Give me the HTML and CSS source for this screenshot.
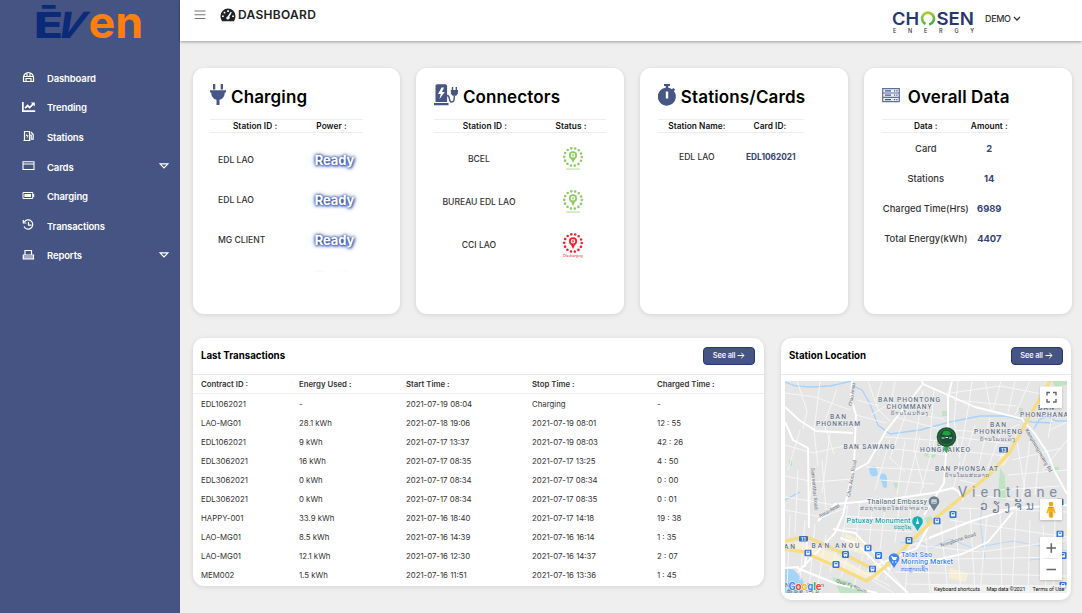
FILE: index.html
```html
<!DOCTYPE html>
<html lang="en">
<head>
<meta charset="utf-8">
<title>Dashboard</title>
<link rel="stylesheet" href="styles.css">
</head>
<body>
<svg width="0" height="0" class="defs">
  <symbol id="gauge" viewBox="0 0 16 14"><path fill="currentColor" fill-rule="evenodd" d="M8 .5A7.5 7.5 0 0 0 .5 8c0 2 .6 3.6 1.6 5.2h11.8C14.900 11.600 15.500 10 15.500 8A7.500 7.500 0 0 0 8 .5zM7.200 2.200h1.700v1.700H7.200zM3.700 3.800h1.700v1.700H3.700zM2 7.400h1.800v1.700H2zM12.200 7.400H14v1.700h-1.800zM10.600 3.800l1.200.7-2.400 4.300c.8 1.300.1 2.700-1.400 2.700-2 0-2.500-2.500-.4-3.100z"/></symbol>
  <symbol id="bus" viewBox="0 0 7 7"><rect width="7" height="7" rx="1.200" fill="#2f73df"/><rect x="1.600" y="1.300" width="3.800" height="4" rx=".7" fill="#fff"/><path fill="#2f73df" d="M2.300 2h2.400v1.300H2.300z"/><path fill="#fff" d="M2 5.200h.8v.8H2zM4.200 5.200H5V6h-.8z"/></symbol>
  <symbol id="connector" viewBox="0 0 24 22"><circle cx="12" cy="11" r="8.800" fill="none" stroke="currentColor" stroke-width="2.600" stroke-linecap="round" stroke-dasharray="0 3.949"/><circle cx="12" cy="9.300" r="3.200" fill="#fff" stroke="currentColor" stroke-width="1.800"/><path d="M12.600 7l-2 2.500h1.200l-.4 2 2-2.700h-1.200z" fill="currentColor"/><path d="M9.700 12.300h4.600L12 17z" fill="currentColor"/></symbol>
</svg>
<div class="app">
  <aside class="sidebar">
    <svg class="brand" viewBox="0 0 110 36">
      <text x="-2" y="35" font-size="36" font-weight="800" fill="#0b2a78" textLength="29" lengthAdjust="spacingAndGlyphs">Ē</text>
      <text transform="translate(16 35) skewX(-25)" font-size="36" font-weight="800" fill="#0b2a78" textLength="27" lengthAdjust="spacingAndGlyphs">V</text>
      <text x="52.500" y="35" font-size="44" font-weight="700" fill="#ff7f0e" textLength="54.500" lengthAdjust="spacingAndGlyphs">en</text>
    </svg>
    <nav class="menu">
      <a class="item"><svg class="mi" viewBox="0 0 14 12"><path d="M1.500 10.500V6.500a5 5 0 0 1 10 0v4zM4 10v-2.500h5V10M1.500 5.500h10M5 2v3M8 2v3" fill="none" stroke="#fff" stroke-width="1.200"/></svg><span>Dashboard</span></a>
      <a class="item"><svg class="mi" viewBox="0 0 14 12"><path d="M.8 1v9.200h12.400" fill="none" stroke="#fff" stroke-width="1.800"/><path d="M3 7.200l2.600-2.600 2 2 4-4" fill="none" stroke="#fff" stroke-width="1.800"/><path d="M8.800 1.500h4v4z" fill="#fff"/></svg><span>Trending</span></a>
      <a class="item"><svg class="mi" viewBox="0 0 14 12"><path d="M2.500 10.500v-9h5v9zM1.500 10.500h7M7.500 5h1.700v4.200h2V4.500L9 2" fill="none" stroke="#fff" stroke-width="1.200"/><path d="M5.400 2.700L3.800 6h1.300l-.5 3 1.800-3.800H5z" fill="#fff"/></svg><span>Stations</span></a>
      <a class="item"><svg class="mi" viewBox="0 0 14 12"><path d="M1 1.700h11v7.800H1zM1 4h11" fill="none" stroke="#fff" stroke-width="1.100"/></svg><span>Cards</span><svg class="caret" viewBox="0 0 10 6"><path d="M1 .8h8L5 5z" fill="none" stroke="#fff" stroke-width="1.200"/></svg></a>
      <a class="item"><svg class="mi" viewBox="0 0 14 12"><path d="M1 2.500h9.700v6H1z" fill="none" stroke="#fff" stroke-width="1"/><path d="M2.400 3.900H9v3.200H2.400zM11 4h1.200v3H11z" fill="#fff"/></svg><span>Charging</span></a>
      <a class="item"><svg class="mi" viewBox="0 0 14 12"><path d="M2.300 3a4.600 4.600 0 1 1-.3 4.500M1.300 1v3h3M6.500 3v3.200h3" fill="none" stroke="#fff" stroke-width="1.200"/></svg><span>Transactions</span></a>
      <a class="item"><svg class="mi" viewBox="0 0 14 12"><path d="M3 6V1.500h6.500V6M1.300 9.800V6h10.200v3.800zM1.500 8h10" fill="none" stroke="#fff" stroke-width="1.200"/></svg><span>Reports</span><svg class="caret" viewBox="0 0 10 6"><path d="M1 .8h8L5 5z" fill="none" stroke="#fff" stroke-width="1.200"/></svg></a>
    </nav>
  </aside>
  <div class="page">
    <header class="topbar">
      <svg class="burger" viewBox="0 0 12 10"><path d="M.5 1h11M.5 4.700h11M.5 8.500h11" stroke="#777" stroke-width="1.100"/></svg>
      <svg class="gauge"><use href="#gauge"/></svg>
      <h1>DASHBOARD</h1>
      <svg class="chosen" viewBox="892 8 84 27">
        <defs><linearGradient id="ring" x1="0" y1="1" x2="1" y2="0"><stop offset="0" stop-color="#b9d52b"/><stop offset="1" stop-color="#35a853"/></linearGradient></defs>
        <g font-size="17.500" font-weight="600" fill="#263774"><text x="892" y="25" textLength="27" lengthAdjust="spacingAndGlyphs">CH</text><text x="936.500" y="25" textLength="37.500" lengthAdjust="spacingAndGlyphs">SEN</text></g>
        <circle cx="928" cy="18.600" r="6" fill="none" stroke="url(#ring)" stroke-width="2.700" stroke-dasharray="33 4.700" transform="rotate(115 928 18.600)"/>
        <text x="893" y="33" font-size="5.500" font-weight="500" fill="#333" textLength="81">ENERGY</text>
      </svg>
      <span class="user">DEMO</span>
      <svg class="chev" viewBox="0 0 8 6"><path d="M1 1l3 3 3-3" fill="none" stroke="#333" stroke-width="1.300"/></svg>
    </header>
    <main>
      <section class="cards">
        <article class="card charging">
          <h2><svg class="ic plug" viewBox="0 0 16 22"><path fill="#465685" d="M3 0h2.300v5.500H3zM10.700 0H13v5.500h-2.300zM0 6.300h16v2.200h-1.200c0 4-2 6.500-5.300 7.300V21h-3v-5.200C3.200 15 1.200 12.500 1.200 8.500H0z"/></svg><span>Charging</span></h2>
          <div class="thead"><b>Station ID :</b><b>Power :</b></div>
          <div class="rows">
            <div class="row"><span>EDL LAO</span><strong>Ready</strong></div>
            <div class="row"><span>EDL LAO</span><strong>Ready</strong></div>
            <div class="row"><span>MG CLIENT</span><strong>Ready</strong></div>
            <div class="row"><span></span><strong>Ready</strong></div>
          </div>
        </article>
        <article class="card connectors">
          <h2><svg class="ic station" viewBox="0 0 24 22"><path fill="#465685" fill-rule="evenodd" d="M1.500 18V2.200C1.500 1 2.300.3 3.400.3h7.800c1.100 0 1.900.7 1.900 1.900V18zM7.500 3.500L4 10h2.700l-1.200 5 5.300-7H8l2-4.500zM0 19h14.500v2.300H0zM17.800 3h1.400v3h2.400V3H23v3h1v2c0 2-1 3.500-2.800 3.900v-.3h-1.600V12C17.800 11.500 16.800 10 16.800 8V6h1z"/><path d="M13 11.500c4 0 1 6.500 4.500 6.500 3 0 2.800-3 2.800-6.500" fill="none" stroke="#465685" stroke-width="1.400"/></svg><span>Connectors</span></h2>
          <div class="thead"><b>Station ID :</b><b>Status :</b></div>
          <div class="rows">
            <div class="row"><span>BCEL</span><i class="status ok"><svg><use href="#connector"/></svg><small>AVAILABLE</small></i></div>
            <div class="row"><span>BUREAU EDL LAO</span><i class="status ok"><svg><use href="#connector"/></svg><small>AVAILABLE</small></i></div>
            <div class="row"><span>CCI LAO</span><i class="status bad"><svg><use href="#connector"/></svg><small>Discharging</small></i></div>
          </div>
        </article>
        <article class="card stations">
          <h2><svg class="ic watch" viewBox="0 0 18 22"><path fill="#465685" fill-rule="evenodd" d="M6 0h6v2h-1.700v1.700a9 9 0 0 1 3.700 1.500l1.200-1.300 2 1.700-1.300 1.500A9 9 0 1 1 7.700 3.700V2H6zM7.800 7.500v7h2.400v-7z"/></svg><span>Stations/Cards</span></h2>
          <div class="thead"><b>Station Name:</b><b>Card ID:</b></div>
          <div class="rows"><div class="row"><span>EDL LAO</span><em>EDL1062021</em></div></div>
        </article>
        <article class="card overall">
          <h2><svg class="ic server" viewBox="0 0 18 15"><path d="M.7.700h16.600v13H.7zM.7 5h16.600M.7 9.400h16.600" fill="#eef0f7" stroke="#5f6da0" stroke-width="1.200"/><path d="M3 2.900h6M3 7.200h6M3 11.600h6M12 2.900h1.200M14.300 2.900h1.200M12 7.200h1.200M14.300 7.200h1.200M12 11.600h1.200M14.300 11.600h1.200" stroke="#465685" stroke-width="1.200"/></svg><span>Overall Data</span></h2>
          <div class="thead"><b>Data :</b><b>Amount :</b></div>
          <div class="rows">
            <div class="row"><span>Card</span><em>2</em></div>
            <div class="row"><span>Stations</span><em>14</em></div>
            <div class="row"><span>Charged Time(Hrs)</span><em>6989</em></div>
            <div class="row"><span>Total Energy(kWh)</span><em>4407</em></div>
          </div>
        </article>
      </section>
      <section class="bottom">
        <article class="panel">
          <div class="phead"><h3>Last Transactions</h3><button>See all <svg viewBox="0 0 8 7"><path d="M.5 3.500h6.500M4.300.8L7 3.500 4.300 6.200" fill="none" stroke="#fff"/></svg></button></div>
          <div class="tr th"><b>Contract ID :</b><b>Energy Used :</b><b>Start Time :</b><b>Stop Time :</b><b>Charged Time :</b></div>
          <div class="tr"><span>EDL1062021</span><span>-</span><span>2021-07-19 08:04</span><span>Charging</span><span>-</span></div>
          <div class="tr"><span>LAO-MG01</span><span>28.1 kWh</span><span>2021-07-18 19:06</span><span>2021-07-19 08:01</span><span>12 : 55</span></div>
          <div class="tr"><span>EDL1062021</span><span>9 kWh</span><span>2021-07-17 13:37</span><span>2021-07-19 08:03</span><span>42 : 26</span></div>
          <div class="tr"><span>EDL3062021</span><span>16 kWh</span><span>2021-07-17 08:35</span><span>2021-07-17 13:25</span><span>4 : 50</span></div>
          <div class="tr"><span>EDL3062021</span><span>0 kWh</span><span>2021-07-17 08:34</span><span>2021-07-17 08:34</span><span>0 : 00</span></div>
          <div class="tr"><span>EDL3062021</span><span>0 kWh</span><span>2021-07-17 08:34</span><span>2021-07-17 08:35</span><span>0 : 01</span></div>
          <div class="tr"><span>HAPPY-001</span><span>33.9 kWh</span><span>2021-07-16 18:40</span><span>2021-07-17 14:18</span><span>19 : 38</span></div>
          <div class="tr"><span>LAO-MG01</span><span>8.5 kWh</span><span>2021-07-16 14:39</span><span>2021-07-16 16:14</span><span>1 : 35</span></div>
          <div class="tr"><span>LAO-MG01</span><span>12.1 kWh</span><span>2021-07-16 12:30</span><span>2021-07-16 14:37</span><span>2 : 07</span></div>
          <div class="tr"><span>MEM002</span><span>1.5 kWh</span><span>2021-07-16 11:51</span><span>2021-07-16 13:36</span><span>1 : 45</span></div>
        </article>
        <article class="panel location">
          <div class="phead"><h3>Station Location</h3><button>See all <svg viewBox="0 0 8 7"><path d="M.5 3.500h6.500M4.300.8L7 3.500 4.300 6.200" fill="none" stroke="#fff"/></svg></button></div>
          <svg class="map" viewBox="785 381 282 212">
            <rect x="785" y="381" width="282" height="212" fill="#e5e5e5"/>
            <!-- city blocks and parks -->
            <path fill="#f7eed6" d="M795 541l40 12 35 22-6 5-40-16-30-14zM845 533l22 10 2 14-24-9zM865 573l8-10 14 3-10 14zM950 568l18 5-2 9-17-4zM1002 450l9 3-6 12-8 2z"/>
            <path fill="#bfe3c3" d="M1052 381h15v4l-12 2zM1019 408h4v5h-4zM942 411h5v5h-5zM925 452l12 2-3 4-10-2zM789 460h3v6h-3zM1000 468l5 8 1 24-8-1zM1053 467h6v4h-6zM925 518l6-2 2 6-6 2zM832 577l18 5 16 11h-26zM893 482l6 2-3 6z"/>
            <path fill="#a5d3fa" d="M785 567l9 3 8 9 4 8-7 6h-14zM869 468q4-3 7-1l2 7q-4 5-8 0zM881 474q5-2 6 4v9q-4 3-5-4-4-4-1-9z"/>
            <g fill="none" stroke="#a5d3fa"><path stroke-width="1.300" d="M785 382l11 4 14 1 20-1 22-5M853 386l9 4 8 14 8 21 12 9 30-4 30-8 30-6 26 0 26 6 20 1M785 500l15-8M1034 429l5-9 8-4 9 5 11 0"/><path stroke-width=".7" d="M900 543l18-2 14 7 17-9 24 9 40-7 54 10M984 500l-4 20 5 40M1028 560l39-3"/></g>
            <!-- side streets -->
            <g fill="none" stroke="#f8f8f8" stroke-width=".9">
              <path d="M785 393l30 4 35 13M797 381l10 30-4 18M820 381l-6 50 4 35M837 389l-13 35 10 30M785 445l28 8 40-9M800 430l-12 40M830 433l-8 60M785 476l30 6 36-3M785 497l50 8M798 470l-3 63M812 477l-4 48M822 460l4 50M868 381l10 28 12 12M882 381l-6 20M895 381l-4 22-20 12M857 400l22 6M856 415l30 8M857 447l22-4M890 400l14 12 40 7M908 408l-18 50 15 14M923 390l-9 60 10 38M934 388l-5 68M898 418l46 12M885 437l60 4M877 447l70 8M866 467l80 4M880 480l55 4M890 440l-15 50M905 441l-8 54M920 436l-15 60M935 440l-15 54"/>
              <path d="M958 381l-4 40 6 38M972 381l-3 23-9 50M985 381l6 29M1001 381l-8 29M1015 381l-7 32M1030 381l-15 34M950 393l50-7 42 8M954 400l63 6M950 430l50 3 20-9M955 437l55 7M950 450l57 6M960 462l-7 28M975 425l-14 45M990 418l-12 50M1005 420l-17 48M1012 460l50-12M1008 475l59-5M1015 430l10 60M1030 440l-8 60M1040 450l-5 45M1050 430l17-8M1055 400l-7 38M1067 440l-24 30M960 480l20 5M1000 490l60-4M975 495l50 6"/>
              <path d="M785 510l38 7 25-10M845 516l65 4M842 528l70 4M848 505l-6 36M860 501l-5 51M873 500l-5 60M886 498l-6 52M900 498l-5 45M912 498l-3 30M925 498l-8 16M790 515l-3 75M805 520l-5 60M815 524l-6 65M826 535l-8 50M838 545l-8 27M850 549l-9 28M863 556l-9 29M835 558l55 28M880 560l28 33M872 580l22 13M885 580l15-30 50-20M910 535l-5 58M925 525l5 68M940 515l8 78M955 510l6 83M970 508l5 85M987 515l-7 78M1000 510l2 83M1017 500l-5 93M1030 520l-2 73M1043 525l3 68M1055 520l-2 73M915 545l65 7 87-12M900 560l160-3M895 572l172 4M905 584l120 2M950 520l117 17M960 508l107 4"/>
            </g>
            <!-- main streets -->
            <g fill="none" stroke="#fff" stroke-width="1.900" stroke-linejoin="round">
              <path d="M785 407l14 13 17 11 37 2M852 381l-1 18 5 16-2 50-11 50-8 18-37 39M785 422l8 18 15 8 1 80M922 385l-36 46-18 32-13 7M922 381l1 3 52 23 48 12M952 381l-4 16v26l-2 30-2 30-20 32M1022 419l13 15 12 18 8 20 12 22M818 521l17-17 57-5 41-6 20-5 6 4 4 8M1067 505l-54 3-44 14-40 16M1013 512l-25 30-26 12-35 8M797 568l40 16 40 9M840 538l16 5 30 30 22 20M785 568l14-1"/>
              <path d="M877 565l40-17 15-28M807 540l-2 27M890 570l-35-37-22-4"/>
            </g>
            <g fill="none" stroke="#f6dc83" stroke-width="3.400" stroke-linejoin="round"><path d="M1050 381l-18 31-22 40-22 24-56 45-47 46-18 14-32-15-32-14-18-3M785 541l14-3h10l29 13 37 19"/></g>
            <!-- place names -->
            <g class="lbl" font-size="6.700">
              <text x="878" y="402" textLength="62">BAN PHONTONG</text><text x="886.500" y="409.300" textLength="45">CHOMMANY</text><text x="830" y="419.300" textLength="16">BAN</text><text x="816" y="426.300" textLength="44">PHONKHAM</text><text x="843.500" y="448.500" textLength="51">BAN SAWANG</text><text x="990" y="427.300" textLength="16">BAN</text><text x="974" y="434.300" textLength="48">PHONKHENG</text><text x="1038" y="410" textLength="16">BAN</text><text x="1020" y="417" textLength="48">PHONPHANA</text><text x="937" y="446" textLength="16">BAN</text><text x="920" y="452.300" textLength="50">HONGKAIKEO</text><text x="935" y="471.300" textLength="63">BAN PHONSA AT</text><text x="811.500" y="547.800" textLength="48">BAN ANOU</text><text x="784" y="548.800" textLength="11">AN</text>
            </g>
            <g class="lao" font-size="5.500"><text x="891" y="415" textLength="37">ບ້ານໂພນຕ້ອງ</text><text x="980" y="440.500" textLength="35">ບ້ານໂພນເຄັງ</text><text x="945" y="477" textLength="44">ບ້ານໂພນສະອາດ</text><text x="860" y="509.500" textLength="68">ສະຖານທູດໄທປະຈຳລາວ</text><text x="894" y="529" textLength="17" fill="#179fa9">ປະຕູໄຊ</text><text x="901" y="570.500" textLength="27" fill="#4285f4">ຕະຫຼາດເຊົ້າ</text></g>
            <text x="958" y="497" class="city" font-size="14.500" textLength="99">Vientiane</text><text x="980" y="510" class="lao" font-size="12" textLength="54" fill="#8391a0">ວຽງຈັນ</text>
            <g class="road" font-size="5"><text transform="translate(852 406) rotate(-82)" textLength="23">Chao Anou</text><text transform="translate(850 497) rotate(-80)" textLength="37">Chao Anou Road</text><text transform="translate(811 468) rotate(85)" textLength="42">Samsenthai Road</text><text transform="translate(820 518) rotate(-30)" textLength="23">Asean Road</text><text transform="translate(1025 430) rotate(60)" textLength="49">Kamphengmuang Rd</text><text transform="translate(941 547) rotate(-18)" textLength="37">Nongbone Road</text><text transform="translate(836 582) rotate(20)" textLength="32">Quai Fa Ngum</text></g>
            <text class="poi" x="867" y="503.500" font-size="7.200" fill="#647b88" textLength="60">Thailand Embassy</text><text class="poi" x="846.500" y="523" font-size="7.200" fill="#179fa9" textLength="64">Patuxay Monument</text><text class="poi" x="901" y="556.500" font-size="7.200" fill="#4285f4" textLength="31">Talat Sao</text><text class="poi" x="901" y="564" font-size="7.200" fill="#4285f4" textLength="52">Morning Market</text>
            <!-- landmark pins -->
            <path fill="#6c828e" d="M934 511l-3.500-5.500a5.300 5.300 0 1 1 7 0z"/><path fill="#fff" d="M931.500 499.500h5v4h-5z"/><path stroke="#6c828e" stroke-width=".7" d="M932 501h4M932 502.500h4"/>
            <path fill="#16adb8" d="M917.500 531l-3.500-5.500a5.300 5.300 0 1 1 7 0z"/><path fill="#fff" d="M917.500 518l1.500 6h-3z"/>
            <path fill="#4285f4" d="M894 568l-3.500-5.500a5.300 5.300 0 1 1 7 0z"/><path fill="#fff" d="M891 556h1.500l.5 1h4l-1 3h-3z"/><path fill="#fff" d="M892 561.500h1.500v1H892zM895 561.500h1.500v1H895z"/>
            <g class="shield"><rect x="999" y="447" width="9" height="5.500" rx="1"/><text x="1001" y="451.700" textLength="5">13</text><rect x="799" y="536" width="9" height="5.500" rx="1"/><text x="801" y="540.700" textLength="5">11</text></g>
            <g><use href="#bus" x="949" y="511" width="8" height="7"/><use href="#bus" x="933" y="517.500" width="8" height="7"/><use href="#bus" x="905" y="537" width="8" height="7"/><use href="#bus" x="864" y="544.500" width="8" height="7"/><use href="#bus" x="874.500" y="552" width="8" height="7"/><use href="#bus" x="841.500" y="551" width="8" height="7"/><use href="#bus" x="804" y="549.500" width="8" height="7"/><use href="#bus" x="832" y="561" width="8" height="7"/><use href="#bus" x="868.500" y="565.500" width="8" height="7"/><use href="#bus" x="1056" y="530.500" width="8" height="7"/><use href="#bus" x="1059" y="552" width="8" height="7"/><use href="#bus" x="1059" y="582" width="8" height="7"/><use href="#bus" x="1056" y="498.500" width="8" height="7"/></g>
            <!-- charging station marker -->
            <path fill="#32a84c" d="M943 444h7l-3.500 9.500z"/><circle cx="946.500" cy="437" r="9.800" fill="#185331"/><circle cx="946.500" cy="437" r="7.800" fill="none" stroke="#497b55" stroke-width=".7"/><path fill="#21a23c" d="M942 434l2-3h5l2 3-3 2h-3z"/><rect x="941" y="435.500" width="11" height="4.500" fill="#234a49"/><path stroke="#d9e8df" stroke-width="1.100" d="M941.500 438h3M945.500 437.500h2.500M949 438h3" />
            <!-- map controls -->
            <g class="ctl"><rect x="1040" y="386.500" width="22" height="21.500"/><rect x="1040" y="499" width="22" height="21"/><rect x="1040" y="537" width="22" height="43"/></g>
            <path fill="none" stroke="#666" stroke-width="1.400" d="M1047 395.500v-3h3M1053 392.500h3v3M1056 399v3h-3M1050 402h-3v-3"/>
            <path stroke="#666" stroke-width="1.600" d="M1046.500 548h9.500M1051.300 543.300v9.500M1046.500 569.500h9.500"/><path stroke="#e6e6e6" stroke-width=".8" d="M1043.500 558.500h15.500"/>
            <circle cx="1051" cy="504" r="2.300" fill="#eea51e"/><path fill="#f5b324" d="M1048.300 507h5.400l2 6-1.200.5-1-2.500-.4 6.500h-4.200l-.4-6.500-1 2.500-1.200-.5z"/><path stroke="#c77e14" stroke-width=".8" d="M1051 512v5.500M1048.500 507.300h5"/>
            <g class="road under" font-size="6"><text x="785" y="587" textLength="39">Nong Chan</text><text x="787" y="593" textLength="32">ຫນອງຈັນ</text></g>
            <text class="google" x="788.500" y="589.500" font-size="10.500" textLength="33"><tspan fill="#4285f4">G</tspan><tspan fill="#ea4335">o</tspan><tspan fill="#fbbc05">o</tspan><tspan fill="#4285f4">g</tspan><tspan fill="#34a853">l</tspan><tspan fill="#ea4335">e</tspan></text>
            <rect x="931" y="585" width="136" height="8" fill="#f5f5f5" opacity=".7"/>
            <g class="credit" font-size="5.500"><text x="934" y="590.700" textLength="46">Keyboard shortcuts</text><text x="986.500" y="590.700" textLength="39">Map data ©2021</text><text x="1032.500" y="590.700" textLength="32">Terms of Use</text></g>
          </svg>
        </article>
      </section>
    </main>
  </div>
</div>
</body>
</html>
```
FILE: styles.css
```css
* { box-sizing: border-box; }
body { margin: 0; font-family: Inter, "Liberation Sans", sans-serif; color: #333; background: #efefef; overflow: hidden; }
h1, h2, h3 { margin: 0; }
svg { display: block; flex: none; }
.defs { position: absolute; }
.app { display: grid; grid-template-columns: 180px 902px; height: 613px; }
.sidebar { background: #465483; color: #fff; padding-top: 3px; }
.brand { width: 110px; height: 36px; margin-left: 36px; overflow: visible; }
.menu { padding-top: 24.500px; }
.item { display: flex; align-items: center; height: 29.600px; padding: 0 11px 0 22px; font-size: 9.500px; font-weight: 600; letter-spacing: -.14px; }
.mi { width: 14px; height: 12px; margin-right: 11px; margin-top: -2px; }
.caret { width: 10px; height: 6px; margin: -2px 0 0 auto; }

.topbar { display: flex; align-items: center; height: 41px; background: #fff; box-shadow: 0 1px 3px rgba(0,0,0,.35); padding: 0 0 12px 14px; }
.burger { width: 12px; height: 10px; }
.gauge { width: 16px; height: 14px; margin-left: 14px; color: #212226; }
h1 { font-size: 12px; font-weight: 600; letter-spacing: .3px; margin-left: 2px; width: 84px; color: #222; }
.chosen { width: 84px; height: 27px; margin: 14px 0 0 auto; }
.user { font-size: 9px; font-weight: 500; width: 27px; margin: 8px 0 0 9px; letter-spacing: -.35px; }
.chev { width: 8px; height: 6px; margin: 8px 61px 0 1px; }

main { padding: 27px 10.500px 0 12.500px; }
.cards { display: grid; grid-template-columns: repeat(4, 1fr); gap: 16.700px; height: 246px; }
.card, .panel { background: #fff; border-radius: 11px; box-shadow: 0 1px 5px rgba(0,0,0,.12); }
.card { padding-left: 17.500px; }
h2 { display: flex; align-items: center; height: 51px; padding-top: 6px; font-size: 17px; font-weight: 600; letter-spacing: .13px; color: #000; white-space: nowrap; }
h2 .ic { margin: -3px 5px 0 0; }
.plug { width: 16px; height: 22px; }
.station { width: 24px; height: 22px; }
.watch { width: 18px; height: 22px; }
h2 .server { width: 18px; height: 15px; margin-right: 8px; }
.thead, .row { display: grid; align-items: center; text-align: center; white-space: nowrap; }
.thead { height: 14px; border: 1px solid #eee; border-width: 1px 0; font-size: 8.300px; color: #111; justify-items: center; }
b { font-weight: 600; }
.thead b { letter-spacing: .06px; }
.row { font-size: 8.600px; font-weight: 500; }
.rows { overflow: hidden; }
.row em { font-style: normal; font-weight: 700; color: #36437a; }
.charging .thead, .charging .row { width: 153px; grid-template-columns: 90px 63px; }
.charging .rows { height: 139px; padding-top: 6.500px; }
.charging .row { height: 40px; text-align: left; padding-left: 8px; grid-template-columns: 82px 69px; }
.charging strong { text-align: center; font-size: 13px; font-weight: 700; color: #fff; letter-spacing: -.1px; text-shadow: 0 0 3px #2347ad, 1px 1px 3px #2f50b5, 0 0 5px #3e5fc4; }
.connectors .thead, .connectors .row { width: 172px; grid-template-columns: 102px 70px; }
.connectors .rows { padding-top: 4px; }
.connectors .row { height: 43px; }
.connectors .row span { padding-right: 12px; }
.status { justify-self: center; display: flex; flex-direction: column; align-items: center; margin-left: 4px; font-style: normal; }
.status svg { width: 24px; height: 22px; overflow: visible; }
.status small { font-size: 3.300px; line-height: 4px; font-weight: 600; opacity: .8; }
.status.ok small { font-size: 2.500px; }
.ok { color: #8ecb68; }
.bad { color: #f3232c; }
.stations .thead, .stations .row { width: 146px; grid-template-columns: 78px 68px; }
.stations .row { height: 47px; }
.stations .row em { font-size: 8.300px; padding-left: 2px; }
.overall .thead, .overall .row { width: 127px; grid-template-columns: 88px 39px; }
.overall .row { height: 30.200px; font-size: 9.400px; }

.bottom { display: grid; grid-template-columns: 571px 290px; gap: 17.500px; align-items: start; padding-top: 24px; }
.panel { height: 248px; overflow: hidden; }
.location { height: 262px; }
.phead { display: flex; align-items: center; justify-content: space-between; height: 36.500px; padding: 0 8.500px 0 8.500px; border-bottom: 1px solid #e8e8e8; }
.location .phead { padding-left: 8px; }
h3 { font-size: 9.700px; font-weight: 700; color: #000; }
button { display: flex; align-items: center; justify-content: center; gap: 2px; width: 52px; height: 18px; padding: 0; border: 1px solid #263774; border-radius: 4px; background: #465483; color: #fff; font: 500 7.500px Inter, sans-serif; letter-spacing: -.2px; }
button svg { width: 8px; height: 7px; }
.tr { display: grid; grid-template-columns: 98px 107px 126px 125px 1fr; align-items: center; height: 19.100px; padding-left: 8.500px; font-size: 7.800px; white-space: nowrap; }
.th { height: 19.500px; border-bottom: 1px solid #eee; }
.map { width: 282px; height: 212px; margin: 6.500px 0 0 4px; }
.lbl { font-family: Roboto, sans-serif; font-weight: 500; fill: #66758a; stroke: #f2f2f2; stroke-width: 1px; paint-order: stroke; }
.lao { font-family: "DejaVu Sans", sans-serif; fill: #718096; }
.city { font-family: Roboto, sans-serif; fill: #8290a3; }
.poi { font-family: Roboto, sans-serif; font-weight: 500; stroke: #fff; stroke-width: 1px; paint-order: stroke; }
.road { font-family: Roboto, "DejaVu Sans", sans-serif; fill: #6b7480; }
.shield rect { fill: #3d70bb; }
.shield text { fill: #fff; font: 700 4.500px Roboto, sans-serif; }
.ctl rect { fill: #fff; filter: drop-shadow(0 1px 1px rgba(0,0,0,.2)); }
.google { font-family: Roboto, sans-serif; font-weight: 700; stroke: #fff; stroke-width: 1px; paint-order: stroke; }
.credit { font-family: Roboto, sans-serif; fill: #111; }
```
